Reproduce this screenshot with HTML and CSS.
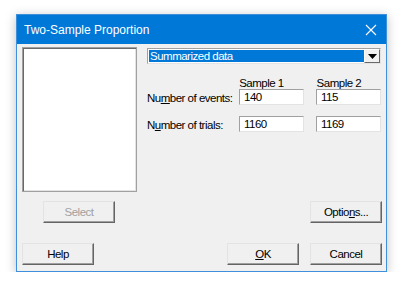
FILE: index.html
```html
<!DOCTYPE html>
<html lang="en">
<head>
  <meta charset="UTF-8">
  <title>Two-Sample Proportion</title>
  <link rel="stylesheet" href="styles.css">
</head>
<body>
  <div class="dialog">
    <div class="titlebar">
      <span class="title">Two-Sample Proportion</span>
      <svg class="close" width="12" height="12" viewBox="0 0 12 12">
        <path d="M1 1 L11 11 M11 1 L1 11" stroke="#fff" stroke-width="1.1" fill="none"/>
      </svg>
    </div>

    <div class="content">
      <div class="top">
        <div class="left">
          <div class="listbox"></div>
          <button class="btn btn-select" disabled>Select</button>
        </div>

        <div class="right">
          <div class="combo">
            <span class="combo-value">Summarized data</span>
            <span class="combo-arrow">
              <svg width="9" height="5" viewBox="0 0 9 5"><path d="M0 0 H9 L4.5 5 Z" fill="#000"/></svg>
            </span>
          </div>

          <div class="row row-head">
            <span class="lbl"></span>
            <span class="colhead">Sample 1</span>
            <span class="colhead">Sample 2</span>
          </div>
          <div class="row">
            <label class="lbl">Nu<u>m</u>ber of events:</label>
            <span class="field">140</span>
            <span class="field">115</span>
          </div>
          <div class="row row-gap">
            <label class="lbl">N<u>u</u>mber of trials:</label>
            <span class="field">1160</span>
            <span class="field">1169</span>
          </div>

          <div class="options-row">
            <button class="btn">Optio<u>n</u>s...</button>
          </div>
        </div>
      </div>

      <div class="bottom">
        <button class="btn">Help</button>
        <div class="bottom-right">
          <button class="btn"><u>O</u>K</button>
          <button class="btn">Cancel</button>
        </div>
      </div>
    </div>
  </div>
</body>
</html>
```

FILE: styles.css
```css
body {
  margin: 0;
  background: #fff;
  font-family: "Liberation Sans", Arial, sans-serif;
  font-size: 11.5px;
  letter-spacing: -0.5px;
  color: #000;
}
.dialog {
  margin: 14px 0 0 16px;
  width: 369px;
  border: 1px solid #3f8fdb;
  background: #f0f0f0;
  box-shadow: 0 2px 10px rgba(0,0,0,0.25);
}
.titlebar {
  height: 29px;
  background: #0078d7;
  color: #fff;
  display: flex;
  align-items: center;
  justify-content: space-between;
  padding: 0 9px 0 7px;
}
.title {
  font-size: 12px;
  letter-spacing: 0;
}
.content {
  padding: 3px 4px 6px 5px;
}
.top {
  display: flex;
}
.left {
  width: 115px;
}
.listbox {
  height: 143px;
  background: #fff;
  border: 1px solid #a0a0a0;
  box-shadow: inset 1px 1px 0 #696969, inset -1px -1px 0 #e3e3e3;
}
.btn {
  display: block;
  width: 72px;
  height: 22px;
  padding: 0;
  font: inherit;
  letter-spacing: inherit;
  color: #000;
  background: #f0f0f0;
  border: 1px solid;
  border-color: #e3e3e3 #646464 #646464 #e3e3e3;
  box-shadow: inset -1px -1px 0 #a0a0a0;
}
.btn:disabled {
  color: #a0a0a0;
}
.btn-select {
  margin: 9px 0 0 21px;
}
.right {
  margin-left: 10px;
  width: 234px;
  display: flex;
  flex-direction: column;
}
.combo {
  height: 16px;
  box-sizing: border-box;
  margin-top: 1px;
  display: flex;
  border: 1px solid #a0a0a0;
  border-right-color: #e3e3e3;
  border-bottom-color: #e3e3e3;
  background: #fff;
}
.combo-value {
  flex: 1;
  margin: 1px 0 1px 1px;
  background: #0078d7;
  color: #fff;
  line-height: 12px;
  padding-left: 1px;
}
.combo-arrow {
  width: 16px;
  box-sizing: border-box;
  display: flex;
  align-items: center;
  justify-content: center;
  background: #f0f0f0;
  border: 1px solid;
  border-color: #fff #696969 #696969 #fff;
}
.row {
  display: flex;
  align-items: center;
  height: 16px;
}
.row-head {
  height: 14px;
  margin-top: 11px;
  align-items: flex-end;
}
.row-gap {
  margin-top: 11px;
}
.lbl {
  width: 92px;
  padding-top: 2px;
}
.colhead {
  width: 65px;
  padding-left: 1px;
  line-height: 12px;
}
.colhead + .colhead {
  margin-left: 12px;
}
.field {
  width: 65px;
  height: 16px;
  box-sizing: border-box;
  background: #fff;
  border: 1px solid;
  border-color: #a0a0a0 #e3e3e3 #e3e3e3 #a0a0a0;
  padding-left: 4px;
  line-height: 14px;
}
.field + .field {
  margin-left: 12px;
}
.options-row {
  display: flex;
  justify-content: flex-end;
  margin-top: auto;
  margin-right: -1px;
}
.bottom {
  display: flex;
  justify-content: space-between;
  margin-top: 20px;
}
.bottom-right {
  display: flex;
  gap: 11px;
}
```
